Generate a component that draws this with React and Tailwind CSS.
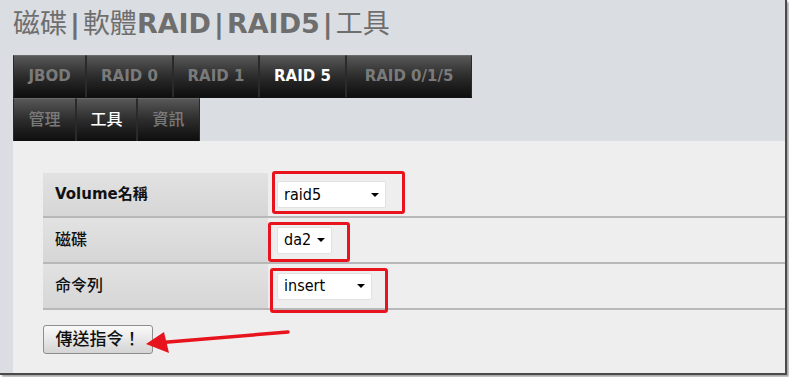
const font = { fontFamily: '"DejaVu Sans", "Noto Sans CJK TC", sans-serif' }
const condensed = { fontFamily: '"DejaVu Sans Condensed", "DejaVu Sans", "Noto Sans CJK TC", sans-serif' }

const topTabs = [
  { label: 'JBOD', w: 'w-[73px]' },
  { label: 'RAID 0', w: 'w-[87px]' },
  { label: 'RAID 1', w: 'w-[86px]' },
  { label: 'RAID 5', w: 'w-[87px]', active: true },
  { label: 'RAID 0/1/5', w: 'w-[126px]' },
]

const subTabs = [
  { label: '管理', w: 'w-[63px]' },
  { label: '工具', w: 'w-[61px]', active: true },
  { label: '資訊', w: 'w-[63px]' },
]

function Tab({ label, active, w, cjk }) {
  return (
    <div
      className={`${w} h-full flex items-center justify-center border-x border-t border-x-[#2a2a2a] border-t-[#6a6a6a] bg-gradient-to-b from-[#585858] via-[#2c2c2c] to-[#0e0e0e] ${
        cjk ? 'text-[16px] font-medium' : 'text-[15px] font-bold'
      } ${active ? 'text-white' : 'text-[#7a7a7a]'}`}
    >
      {label}
    </div>
  )
}

function Select({ value, width }) {
  return (
    <div
      className={`${width} h-[27px] bg-white border border-[#e2e2e2] rounded-[2px] flex items-center justify-between pl-[6px] pr-[6px] text-[16px] text-black`}
      style={condensed}
    >
      <span>{value}</span>
      <span className="w-0 h-0 border-x-[4px] border-x-transparent border-t-[4px] border-t-black" />
    </div>
  )
}

const rows = [
  { label: 'Volume名稱', bold: true, value: 'raid5', width: 'w-[109px]' },
  { label: '磁碟', value: 'da2', width: 'w-[55px]' },
  { label: '命令列', value: 'insert', width: 'w-[95px]' },
]

export default function App() {
  return (
    <div className="w-[789px] h-[377px] bg-white overflow-hidden" style={font}>
      <div className="relative w-[787px] h-[375px] bg-[#dadde2] border-r-2 border-b-2 border-[#4a4a4a] shadow-[2px_2px_2px_rgba(0,0,0,0.35)] flex flex-col">
        <h1 className="h-[55px] pl-[13px] pt-[6px] text-[27px] leading-[36px] text-[#6e6e6e] font-normal whitespace-nowrap">
          磁碟<span className="font-bold mx-[3px]">|</span>軟體<span className="font-bold">RAID</span>
          <span className="font-bold mx-[3px]">|</span>
          <span className="font-bold">RAID5</span>
          <span className="font-bold mx-[3px]">|</span>工具
        </h1>

        <div className="pl-[13px]">
          <div className="flex h-[43px] w-fit border-b border-[#111]">
            {topTabs.map((t) => (
              <Tab key={t.label} {...t} />
            ))}
          </div>
          <div className="flex h-[43px] w-fit">
            {subTabs.map((t) => (
              <Tab key={t.label} {...t} cjk />
            ))}
          </div>
        </div>

        <div className="flex-1 ml-[13px] bg-[#eeeeee] pt-[32px] pl-[30px]">
          <div className="flex flex-col">
            {rows.map((r, i) => (
              <div
                key={r.label}
                className={`flex border-b-2 border-[#b8b8b8] ${i === 0 ? 'h-[45px]' : 'h-[46px]'}`}
              >
                <div
                  className={`w-[225px] flex items-center pl-[12px] bg-gradient-to-b from-[#e2e2e2] to-[#d6d6d6] text-[#111] ${
                    r.bold ? 'font-bold text-[15px]' : 'text-[16px] font-medium'
                  }`}
                >
                  {r.label}
                </div>
                <div className="flex-1 flex items-center pl-[9px]">
                  <Select value={r.value} width={r.width} />
                </div>
              </div>
            ))}
          </div>

          <button className="mt-[15px] w-[110px] h-[29px] rounded-[3px] border border-[#8e8e8e] bg-gradient-to-b from-[#fafafa] to-[#d4d4d4] text-[17px] font-medium text-[#111] flex items-center justify-center">
            傳送指令！
          </button>
        </div>

        {/* red annotation boxes */}
        <div className="absolute left-[272px] top-[171px] w-[133px] h-[43px] border-[3px] border-[#e8141d] rounded-[3px]" />
        <div className="absolute left-[268px] top-[222px] w-[82px] h-[40px] border-[3px] border-[#e8141d] rounded-[3px]" />
        <div className="absolute left-[270px] top-[268px] w-[118px] h-[45px] border-[3px] border-[#e8141d] rounded-[3px]" />

        <svg className="absolute left-0 top-0 pointer-events-none" width="789" height="377">
          <line x1="288" y1="332" x2="162" y2="342.5" stroke="#e8141d" strokeWidth="3.5" strokeLinecap="round" />
          <polygon points="146,344 164,332 169,353" fill="#e8141d" />
        </svg>
      </div>
    </div>
  )
}
